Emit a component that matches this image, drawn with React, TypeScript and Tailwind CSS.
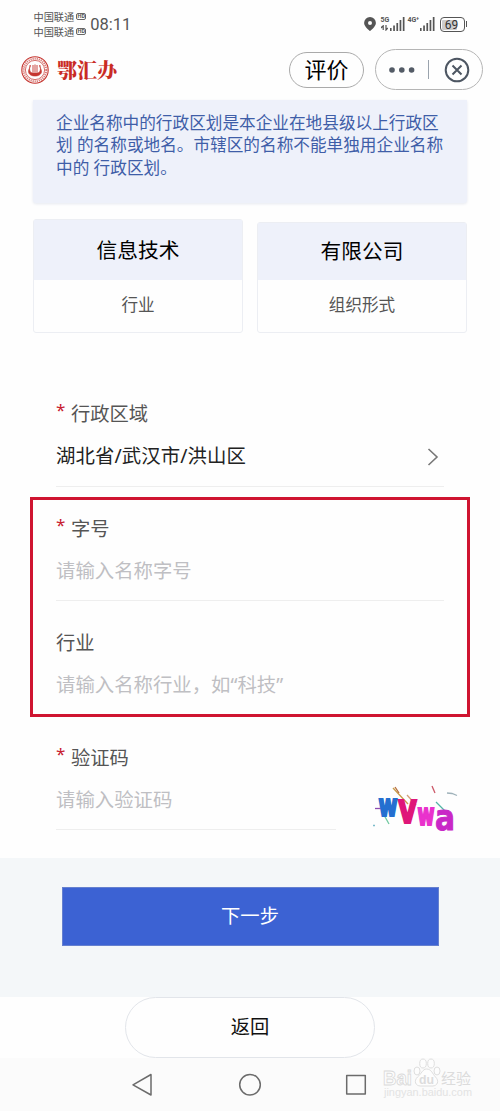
import React from 'react';

const notice = [
  '企业名称中的行政区划是本企业在地县级以上行政区',
  '划 的名称或地名。市辖区的名称不能单独用企业名称',
  '中的 行政区划。',
];

const Signal: React.FC = () => (
  <svg width="15" height="16" viewBox="0 0 15 16" fill="#555">
    <rect x="0" y="12" width="1.6" height="3" />
    <rect x="3.2" y="9.5" width="1.7" height="5.5" />
    <rect x="6.4" y="7" width="1.7" height="8" />
    <rect x="9.6" y="4" width="1.7" height="11" />
    <rect x="12.8" y="1" width="1.7" height="14" />
  </svg>
);

const Carrier: React.FC = () => (
  <div className="flex h-[15px] items-center gap-[2px]">
    <span className="text-[10.2px] leading-[16px] text-[#555]">中国联通</span>
    <span className="flex h-[7px] w-[10px] items-center justify-center rounded-[2px] border border-[#666] font-['Roboto'] text-[5.5px] leading-none font-bold text-[#555]">
      HD
    </span>
  </div>
);

const StatusBar: React.FC = () => (
  <div className="flex h-[39px] items-start justify-between pr-[33px] pl-[33.5px]">
    <div className="flex items-start pt-[9px]">
      <div>
        <Carrier />
        <Carrier />
      </div>
      <span className="ml-[4px] pt-[4px] font-['Roboto'] text-[16.5px] leading-[23px] text-[#555]">08:11</span>
    </div>
    <div className="flex pt-[16px]">
      <svg width="12" height="16" viewBox="0 0 12 16" className="mr-[5px]">
        <path
          d="M6 1a5.9 5.9 0 0 0-5.9 5.9C.1 10.5 6 15 6 15s5.9-4.5 5.9-8.1A5.9 5.9 0 0 0 6 1zm0 3.9a2 2 0 1 1 0 4 2 2 0 0 1 0-4z"
          fill="#555"
        />
      </svg>
      <div className="w-[9px] font-['Roboto'] text-[7px] leading-[8px] font-bold text-[#555]">
        5G
        <svg width="7" height="6" viewBox="0 0 7 6" className="mt-px" fill="none" stroke="#555" strokeWidth="1.2">
          <path d="M2.2 0v5M0 3l2.2-2.5M5 0v5l1.8-2" />
        </svg>
      </div>
      <Signal />
      <div className="ml-[3px] w-[12px] font-['Roboto'] text-[7px] leading-[8px] font-bold whitespace-nowrap text-[#555]">
        4G<sup className="text-[5px]">+</sup>
      </div>
      <Signal />
      <div className="mt-[1px] ml-[5px] flex h-[15px] w-[25px] items-center rounded-[4px] border-[1.5px] border-[#555] p-[1.5px]">
        <div className="flex h-full w-[15px] items-center justify-center rounded-[1px] bg-[#ccc] pl-[4px] font-['Roboto'] text-[12px] leading-none text-[#333]">
          69
        </div>
      </div>
      <div className="mt-[5px] ml-[1px] h-[6px] w-[1.5px] bg-[#555]" />
    </div>
  </div>
);

const Logo: React.FC = () => (
  <svg width="28" height="28" viewBox="0 0 28 28" fill="none" stroke="#c5352f">
    <circle cx="14" cy="14" r="13.2" strokeWidth="1.1" />
    <circle cx="14" cy="14" r="11.3" strokeWidth="2" strokeDasharray="1.2 0.9" opacity="0.65" />
    <circle cx="14" cy="14" r="9.6" strokeWidth="0.7" />
    <path
      d="M9.2 9c.8 2-1.7 3.5-1.7 6.5 0 2.5 2.5 4.5 6.5 4.5s6.5-2 6.5-4.5c0-3-2.5-4.5-1.7-6.5 1 3 1.2 8-2.8 8h-4c-4 0-3.8-5-2.8-8z"
      fill="#c5352f"
      strokeWidth="0.6"
    />
    <path d="M12 9v7.5M14 8.5v8M16 9v7.5" strokeWidth="0.9" />
  </svg>
);

const Header: React.FC = () => (
  <div className="flex h-[61px] items-center pr-[17px] pl-[21px]">
    <Logo />
    <span className="ml-[8px] font-['Noto_Serif_CJK_SC','Noto_Sans_CJK_SC',serif] text-[20px] leading-[28px] font-black text-[#c92b24]">
      鄂汇办
    </span>
    <button className="ml-auto h-[36px] w-[75px] rounded-full border border-[#aaa] pb-[2px] text-[22px] leading-[32px] text-black">
      评价
    </button>
    <div className="ml-[11px] flex h-[41px] w-[108px] items-center rounded-full border border-[#b5b5b5] pl-[13px]">
      <svg width="26" height="6" viewBox="0 0 26 6" fill="#535b66">
        <circle cx="3" cy="3" r="2.8" />
        <circle cx="12.8" cy="3" r="2.8" />
        <circle cx="22.6" cy="3" r="2.8" />
      </svg>
      <div className="ml-[13px] h-[19px] w-px bg-[#9aa3ad]" />
      <svg width="26" height="26" viewBox="0 0 26 26" className="ml-[15px]" fill="none" stroke="#4d5662" strokeWidth="2">
        <circle cx="13" cy="13" r="11.3" />
        <path d="M8.5 8.5l9 9M17.5 8.5l-9 9" />
      </svg>
    </div>
  </div>
);

interface FieldProps {
  label: string;
  value: string;
  required?: boolean;
  filled?: boolean;
  line?: boolean;
}

const Field: React.FC<FieldProps> = ({ label, value, required, filled, line = true }) => (
  <div className={`h-[114.5px] border-b pt-[28px] ${line ? 'border-[#eee]' : 'border-transparent'}`}>
    <div className="flex h-[28px] text-[19.3px] leading-[28px] text-[#555]">
      {required && <span className="-mt-[4px] w-[15px] font-['Noto_Sans'] text-[17px] text-[#c8202f]">*</span>}
      {label}
    </div>
    <div
      className={`mt-[14px] flex h-[28px] items-center justify-between text-[19.4px] leading-[28px] ${filled ? 'tracking-[0.1px] text-[#222]' : 'text-[#bfbfc3]'}`}
    >
      {value}
      {filled && (
        <svg width="12" height="18" viewBox="0 0 12 18" className="mt-[2px] mr-[5px]" fill="none" stroke="#777" strokeWidth="1.6">
          <path d="M1.5 1L10 9l-8.5 8" />
        </svg>
      )}
    </div>
  </div>
);

const Captcha: React.FC = () => (
  <svg width="90" height="54" viewBox="0 0 90 54" className="font-['DejaVu_Sans'] font-bold">
    <g fill="none" strokeWidth="1.3">
      <path d="M23 4l15 16" stroke="#c79a48" />
      <path d="M25 3l4 6" stroke="#b56a38" />
      <path d="M37 11l9 10" stroke="#d4a078" />
      <path d="M62 2l3 7" stroke="#cc5868" />
      <path d="M77 9l5 .5 5 2" stroke="#9fb2ba" />
      <path d="M66 18l9 9" stroke="#50b5a5" />
      <path d="M14 31l5 9" stroke="#70c9a0" />
      <path d="M5 24.5h8" stroke="#8d4cb0" />
      <path d="M3 41.5h2" stroke="#7cbccb" />
    </g>
    <g strokeWidth="2.2">
      <text x="8.5" y="32" fontSize="30" textLength="19" lengthAdjust="spacingAndGlyphs" fill="#246fd0" stroke="#246fd0">w</text>
      <text x="28" y="39" fontSize="42" textLength="19" lengthAdjust="spacingAndGlyphs" fill="#df1679" stroke="#df1679">v</text>
      <text x="47.5" y="41" fontSize="30" textLength="17" lengthAdjust="spacingAndGlyphs" fill="#e931cc" stroke="#e931cc">w</text>
      <text x="65" y="46" fontSize="36" textLength="20" lengthAdjust="spacingAndGlyphs" fill="#c928c7" stroke="#c928c7" strokeWidth="1">a</text>
    </g>
  </svg>
);

const Watermark: React.FC = () => (
  <svg width="94" height="46" viewBox="0 0 94 46" className="absolute top-[-2px] right-[26px]">
    <g fill="#fdfdfd" stroke="#dadada" strokeWidth="0.9">
      <ellipse cx="37" cy="15" rx="3" ry="4" />
      <ellipse cx="43" cy="7.5" rx="3.3" ry="4.5" />
      <ellipse cx="51" cy="7.5" rx="3.3" ry="4.5" />
      <ellipse cx="57" cy="15" rx="3" ry="4" />
      <path d="M46.5 13c5 0 6 5 9 8 4 4 2 9-3 9h-12c-5 0-7-5-3-9 4-3 5-8 9-8z" />
      <g className="font-['Liberation_Sans'] font-bold">
        <text x="3" y="29" fontSize="21" textLength="29" lengthAdjust="spacingAndGlyphs">Bai</text>
        <text x="39" y="27.5" fontSize="12" textLength="15" lengthAdjust="spacingAndGlyphs" fill="#dcdcdc" stroke="none">du</text>
      </g>
    </g>
    <text x="61" y="28" fontSize="15" fill="#dcdcdc">经验</text>
    <text x="4" y="40" fontSize="10" textLength="88" lengthAdjust="spacingAndGlyphs" fill="#e3e3e3" className="font-['Liberation_Sans']">
      jingyan.baidu.com
    </text>
  </svg>
);

const App: React.FC = () => {
  return (
    <div className="h-[1111px] w-[500px] overflow-hidden bg-[#fefefe] font-['Noto_Sans','Noto_Sans_CJK_SC',sans-serif]">
      <StatusBar />
      <Header />

      <div className="mx-[33px] h-[103px] rounded-b-[3px] bg-[#eef1fa] pt-[12px] pl-[23px] text-[16.65px] leading-[22.3px] whitespace-pre text-[#3f5ea8] shadow-[0_1px_3px_#e6e9f0]">
        {notice.map((line) => (
          <p key={line}>{line}</p>
        ))}
      </div>

      {/* Name parts */}
      <div className="mx-[33px] mt-[16px] flex h-[114px] items-end justify-between text-center">
        <div className="w-[210px] rounded-[3px] border border-[#eceef3]">
          <div className="h-[60px] bg-[#eef1fa] text-[20.7px] leading-[60px] text-black">信息技术</div>
          <div className="h-[52px] text-[16.6px] leading-[50px] text-[#555]">行业</div>
        </div>
        <div className="w-[210px] rounded-[3px] border border-[#eceef3]">
          <div className="h-[57px] bg-[#eef1fa] text-[20.7px] leading-[57px] text-black">有限公司</div>
          <div className="h-[52px] text-[16.6px] leading-[50px] text-[#555]">组织形式</div>
        </div>
      </div>

      <div className="mt-[39px] h-[486px] px-[56px]">
        <Field label="行政区域" value="湖北省/武汉市/洪山区" required filled />
        <div className="relative">
          <Field label="字号" value="请输入名称字号" required />
          <Field label="行业" value="请输入名称行业，如“科技”" line={false} />
          <div className="absolute -inset-x-[26px] top-[10.5px] bottom-[-1.5px] border-[3px] border-[#cf1430]" />
        </div>
        <div className="-mr-[40px] flex">
          <div className="w-[280px]">
            <Field label="验证码" value="请输入验证码" required />
          </div>
          <div className="mt-[68px] ml-[34px]">
            <Captcha />
          </div>
        </div>
      </div>

      <div className="h-[139px] bg-[#f4f7f9] px-[61.5px] pt-[29px]">
        <button className="block h-[59px] w-full border border-[#6580cf] bg-[#3c62d3] pb-[2px] text-[19.3px] leading-[55px] text-white">下一步</button>
      </div>
      <button className="mx-auto block h-[61px] w-[250px] rounded-full border border-[#e2e5ea] pb-[2px] text-[19.3px] leading-[57px] text-[#111]">
        返回
      </button>

      <div className="relative h-[53px] bg-[#fbfbfb]">
        <div className="flex items-center justify-center gap-[83px] pt-[15px]">
          <svg width="24" height="24" viewBox="0 0 24 24" fill="none" stroke="#6b6b6b" strokeWidth="1.5" strokeLinejoin="round">
            <path d="M20 1.5v20.5L2 11.8z" />
          </svg>
          <svg width="24" height="24" viewBox="0 0 24 24" fill="none" stroke="#6b6b6b" strokeWidth="1.5">
            <circle cx="12" cy="11.7" r="10.3" />
          </svg>
          <svg width="24" height="24" viewBox="0 0 24 24" fill="none" stroke="#6b6b6b" strokeWidth="1.5" strokeLinejoin="round">
            <rect x="1.7" y="2.5" width="18.6" height="18.6" />
          </svg>
        </div>
        <Watermark />
      </div>
    </div>
  );
};

export default App;
